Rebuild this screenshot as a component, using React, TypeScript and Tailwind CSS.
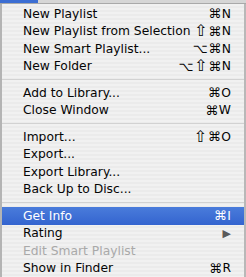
import React from "react";

type Item =
  | { kind: "item"; label: string; mods?: string; keyChar?: string; active?: boolean; disabled?: boolean; submenu?: boolean }
  | { kind: "sep" };

const items: Item[] = [
  { kind: "item", label: "New Playlist", mods: "⌘", keyChar: "N" },
  { kind: "item", label: "New Playlist from Selection", mods: "⇧⌘", keyChar: "N" },
  { kind: "item", label: "New Smart Playlist...", mods: "⌥⌘", keyChar: "N" },
  { kind: "item", label: "New Folder", mods: "⌥⇧⌘", keyChar: "N" },
  { kind: "sep" },
  { kind: "item", label: "Add to Library...", mods: "⌘", keyChar: "O" },
  { kind: "item", label: "Close Window", mods: "⌘", keyChar: "W" },
  { kind: "sep" },
  { kind: "item", label: "Import...", mods: "⇧⌘", keyChar: "O" },
  { kind: "item", label: "Export..." },
  { kind: "item", label: "Export Library..." },
  { kind: "item", label: "Back Up to Disc..." },
  { kind: "sep" },
  { kind: "item", label: "Get Info", mods: "⌘", keyChar: "I", active: true },
  { kind: "item", label: "Rating", submenu: true },
  { kind: "item", label: "Edit Smart Playlist", disabled: true },
  { kind: "item", label: "Show in Finder", mods: "⌘", keyChar: "R" },
];

// shift glyph is drawn small in DejaVu, so it gets a bigger size
function Mod({ ch }: { ch: string }) {
  return <span className={ch === "⇧" ? "text-[16px] mr-[1px]" : "text-[13px] mr-[0.5px]"}>{ch}</span>;
}

function MenuRow({ item }: { item: Extract<Item, { kind: "item" }> }) {
  const text = item.active ? "text-white" : item.disabled ? "text-[#a9a9a9]" : "text-[#050505]";
  return (
    <div
      className={`flex h-[17.5px] items-center justify-between pl-[21px] pr-[13px] ${text} ${
        item.active ? "bg-gradient-to-b from-[#4a7cdb] to-[#3464cf]" : ""
      }`}
    >
      <span className="text-[12.3px]">{item.label}</span>
      {item.keyChar && (
        <span className="flex items-center">
          {Array.from(item.mods ?? "").map((ch, i) => (
            <Mod key={i} ch={ch} />
          ))}
          <span className="text-[12.3px]">{item.keyChar}</span>
        </span>
      )}
      {item.submenu && <span className="text-[11px] text-[#5a5a5a]">▶</span>}
    </div>
  );
}

export default function App() {
  return (
    <div className="w-[246px] h-[277px] overflow-hidden font-['DejaVu_Sans',sans-serif] text-[12px] leading-none">
      {/* menu bar bottom edge */}
      <div className="flex h-[3px]">
        <div className="w-[38px] bg-[#3c6ed3]" />
        <div className="flex-1 bg-[#d6d6d6]" />
      </div>
      <div className="h-px bg-[#a9a9a9]" />

      {/* menu body */}
      <div className="h-full border-l-[2px] border-r-[2px] border-l-[#b4b4b4] border-r-[#b8b8b8] bg-[repeating-linear-gradient(to_bottom,#f1f1f1_0px,#f1f1f1_2px,#ebebeb_2px,#ebebeb_4px)] pt-[1px]">
        {items.map((item, i) =>
          item.kind === "sep" ? (
            <div key={i} className="flex h-[9px] items-center">
              <div className="h-px w-full bg-[#d2d2d2]" />
            </div>
          ) : (
            <MenuRow key={i} item={item} />
          )
        )}
      </div>
    </div>
  );
}
